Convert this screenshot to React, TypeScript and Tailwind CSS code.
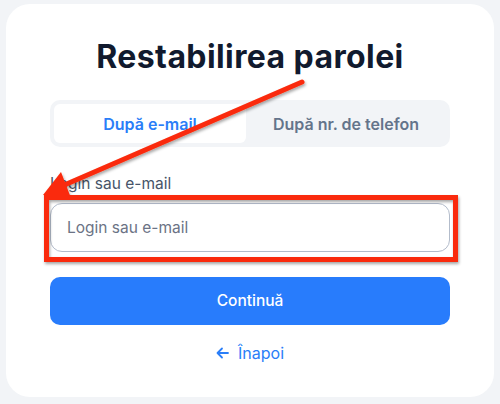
import React from "react";

export default function App() {
  return (
    <div className="relative w-[500px] h-[404px] bg-[#f2f4f7] pt-[4px] px-[6px]" style={{ fontFamily: "Inter, 'Noto Sans', sans-serif" }}>
      <div className="w-[488px] h-[393px] bg-white rounded-[24px] px-[44px] pt-[33px] flex flex-col">
        <h1 className="text-center text-[32px] leading-[40px] font-bold text-[#111a2e] tracking-[0.4px]">Restabilirea parolei</h1>
        <div className="mt-[23px] h-[47px] bg-[#f2f4f7] rounded-[10px] p-[4px] flex">
          <div className="w-[192px] bg-white rounded-[6px] flex items-center justify-center text-[16px] font-semibold text-[#2a7ef8]">După e-mail</div>
          <div className="flex-1 flex items-center justify-center text-[16px] font-semibold text-[#64748b]">După nr. de telefon</div>
        </div>
        <label className="mt-[27px] text-[15.5px] leading-[20px] text-[#475569]">Login sau e-mail</label>
        <div className="mt-[9px] h-[49px] rounded-[12px] border border-[#b3bccb] flex items-center px-[16px] text-[15.5px] text-[#6b7385]">Login sau e-mail</div>
        <button className="mt-[25px] h-[48px] rounded-[10px] bg-[#287cfc] text-white text-[15.5px] font-medium flex items-center justify-center">Continuă</button>
        <div className="mt-[16px] flex items-center justify-center gap-[9px] text-[16px] text-[#2a7ef8]">
          <svg width="13" height="12" viewBox="0 0 13 12" fill="none" stroke="#2a7ef8" strokeWidth="1.8" strokeLinecap="round" strokeLinejoin="round">
            <path d="M12 6H1.5M6 1.5L1.5 6L6 10.5" />
          </svg>
          <span>Înapoi</span>
        </div>
      </div>
      <svg className="absolute left-0 top-0 pointer-events-none" width="500" height="404" viewBox="0 0 500 404">
        <defs>
          <filter id="sh" x="-10%" y="-10%" width="120%" height="130%">
            <feDropShadow dx="1" dy="2" stdDeviation="1.5" floodColor="#000" floodOpacity="0.35" />
          </filter>
        </defs>
        <g filter="url(#sh)">
          <rect x="46.5" y="197.5" width="409" height="62" fill="none" stroke="#fa2a0a" strokeWidth="5" />
          <line x1="302" y1="82" x2="62" y2="186" stroke="#fa2a0a" strokeWidth="5" strokeLinecap="round" />
          <polygon points="43,195 61,172 71,198" fill="#fa2a0a" />
        </g>
      </svg>
    </div>
  );
}
